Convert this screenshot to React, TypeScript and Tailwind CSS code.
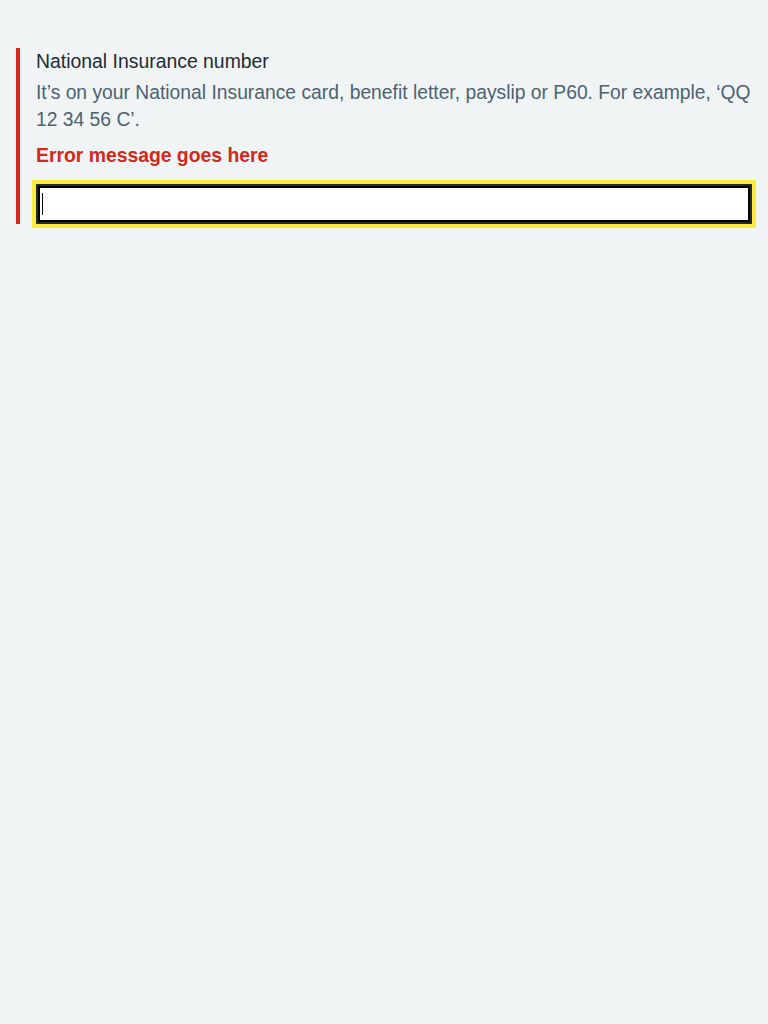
export default function App() {
  return (
    <main className="min-h-screen bg-[#f0f4f5] px-4 pt-12 font-['Liberation_Sans',Arial,sans-serif]">
      <div className="border-l-4 border-[#d5281b] pl-4">
        <label htmlFor="ni-number" className="block text-[19.4px] leading-[26px] text-[#212b32]">
          National Insurance number
        </label>
        <div className="mt-[5px] text-[19.3px] leading-[27px] text-[#4c6272]">
          It’s on your National Insurance card, benefit letter, payslip or P60. For example, ‘QQ 12 34 56 C’.
        </div>
        <p className="mt-[9px] text-[19.35px] font-bold leading-[26px] text-[#d5281b]">Error message goes here</p>
        <div className="relative mt-4 w-[716px]">
          <input
            id="ni-number"
            type="text"
            className="block h-10 w-full border-2 border-[#212b32] bg-white px-1 text-[19px] caret-transparent shadow-[inset_0_0_0_2px_#000000] outline-4 outline-[#ffeb3b] outline-solid focus:outline-4 focus:outline-[#ffeb3b]"
          />
          <span className="pointer-events-none absolute left-[6px] top-[9px] h-[22px] w-px bg-[#0b0c0c]" />
        </div>
      </div>
    </main>
  );
}
